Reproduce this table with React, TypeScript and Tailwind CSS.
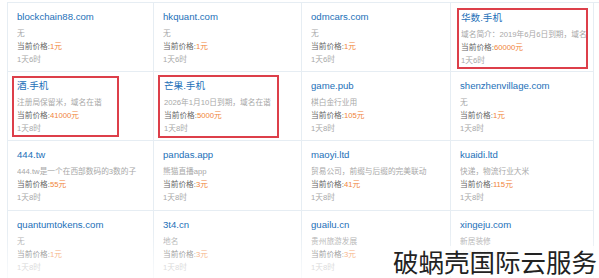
type Domain = {
  name: string;
  desc: string;
  price: string;
  time: string;
  mark?: "a" | "b" | "c";
};

const rows: Domain[][] = [
  [
    { name: "blockchain88.com", desc: "无", price: "1元", time: "1天6时" },
    { name: "hkquant.com", desc: "无", price: "1元", time: "1天6时" },
    { name: "odmcars.com", desc: "无", price: "1元", time: "1天6时" },
    { name: "华数.手机", desc: "域名简介：2019年6月6日到期，域名", price: "60000元", time: "1天6时", mark: "c" },
  ],
  [
    { name: "酒.手机", desc: "注册局保留米，域名在谐", price: "41000元", time: "1天8时", mark: "a" },
    { name: "芒果.手机", desc: "2026年1月10日到期，域名在谐", price: "5000元", time: "1天8时", mark: "b" },
    { name: "game.pub", desc: "棋白金行业用", price: "105元", time: "1天8时" },
    { name: "shenzhenvillage.com", desc: "无", price: "1元", time: "1天8时" },
  ],
  [
    { name: "444.tw", desc: "444.tw是一个在西部数码的3数的子", price: "55元", time: "1天8时" },
    { name: "pandas.app", desc: "熊猫直播app", price: "3元", time: "1天8时" },
    { name: "maoyi.ltd", desc: "贸易公司，前缀与后缀的完美联动", price: "41元", time: "1天8时" },
    { name: "kuaidi.ltd", desc: "快递，物流行业大米", price: "115元", time: "1天8时" },
  ],
  [
    { name: "quantumtokens.com", desc: "无", price: "1元", time: "1天8时" },
    { name: "3t4.cn", desc: "地名", price: "3元", time: "1天8时" },
    { name: "guailu.cn", desc: "贵州旅游发展", price: "3元", time: "1天8时" },
    { name: "xingeju.com", desc: "新居装修", price: "455元", time: "1天8时" },
  ],
];

function Lines({ d }: { d: Domain }) {
  return (
    <>
      <div className="text-[9.6px] leading-[15px] text-[#2370b8] whitespace-nowrap">{d.name}</div>
      <div className="mt-[3px] text-[7.7px] leading-[13px] text-[#a8a8a8] whitespace-nowrap overflow-hidden">
        {d.desc}
      </div>
      <div className="text-[7.7px] leading-[13px] whitespace-nowrap">
        <span className="text-[#666]">当前价格:</span>
        <span className="text-[#f0843a]">{d.price}</span>
      </div>
      <div className="text-[7.7px] leading-[13px] text-[#a8a8a8] whitespace-nowrap">{d.time}</div>
    </>
  );
}

function Cell({ d }: { d: Domain }) {
  if (d.mark === "a") {
    return (
      <div className="h-full border-r border-b border-[#e6edf3] pl-[4px] pt-[4px]">
        <div className="w-[107px] h-[61px] border-2 border-[#dd3f4a] pl-[3px] overflow-hidden">
          <Lines d={d} />
        </div>
      </div>
    );
  }
  if (d.mark === "b") {
    return (
      <div className="h-full border-r border-b border-[#e6edf3] pl-[4px] pt-[3px]">
        <div className="w-[121px] h-[63px] border-2 border-[#dd3f4a] pl-[4px] pt-[1px] overflow-hidden">
          <Lines d={d} />
        </div>
      </div>
    );
  }
  if (d.mark === "c") {
    return (
      <div className="h-full border-r border-b border-[#e6edf3] pl-[6px] pt-[5px]">
        <div className="w-[131px] h-[61px] border-2 border-[#dd3f4a] pl-[2px] overflow-hidden">
          <Lines d={d} />
        </div>
      </div>
    );
  }
  return (
    <div className="h-full border-r border-b border-[#e6edf3] pl-[9px] pt-[6px] overflow-hidden">
      <Lines d={d} />
    </div>
  );
}

export default function App() {
  return (
    <div
      className="relative w-[599px] h-[278px] overflow-hidden bg-white pl-[7px] pt-[2px]"
      style={{ fontFamily: '"Liberation Sans", "Noto Sans CJK SC", sans-serif' }}
    >
      <div className="grid grid-cols-[146px_148px_149px_143px] grid-rows-[69px_69px_70px_69px] border-l border-t border-[#e6edf3]">
        {rows.flat().map((d) => (
          <Cell key={d.name} d={d} />
        ))}
      </div>
      <div className="absolute left-0 right-0 top-[228px] bottom-0 bg-gradient-to-b from-white/0 to-white/75" />
      <div
        className="absolute right-[2px] bottom-[2px] bg-white/85 pl-[3px] text-[25.5px] leading-[30px] text-[#222]"
        style={{ fontFamily: '"Noto Sans CJK SC", sans-serif' }}
      >
        破蜗壳国际云服务
      </div>
    </div>
  );
}
